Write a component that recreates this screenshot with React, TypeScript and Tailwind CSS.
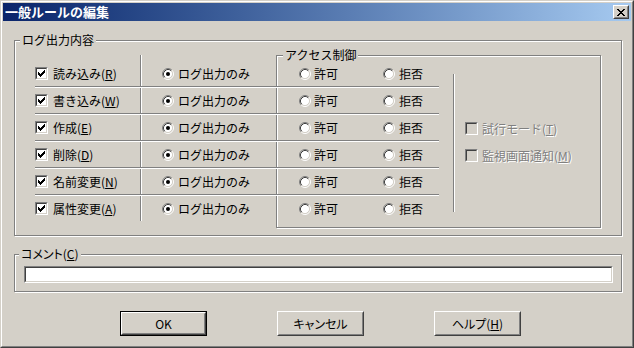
import React from 'react';

const rows = [
  { label: '読み込み', key: 'R' },
  { label: '書き込み', key: 'W' },
  { label: '作成', key: 'E' },
  { label: '削除', key: 'D' },
  { label: '名前変更', key: 'N' },
  { label: '属性変更', key: 'A' },
];

function Mnemonic({ k }: { k: string }) {
  return (
    <>
      (<span className="underline underline-offset-1">{k}</span>)
    </>
  );
}

function Checkbox({ checked, disabled }: { checked?: boolean; disabled?: boolean }) {
  const tops = [2, 3, 4, 3, 2, 1, 0];
  return (
    <div className="flex h-[13px] w-[13px] shrink-0 border border-t-[#808080] border-l-[#808080] border-b-white border-r-white">
      <div
        className={`flex flex-1 items-center justify-center border border-t-[#404040] border-l-[#404040] border-b-[#d4d0c8] border-r-[#d4d0c8] ${
          disabled ? 'bg-[#d4d0c8]' : 'bg-white'
        }`}
      >
        {checked && (
          <svg width="7" height="7" shapeRendering="crispEdges">
            {tops.map((y, x) => (
              <rect key={x} x={x} y={y} width="1" height="3" fill="#000" />
            ))}
          </svg>
        )}
      </div>
    </div>
  );
}

function Radio({ checked }: { checked?: boolean }) {
  return (
    <svg width="12" height="12" className="shrink-0">
      <circle cx="6" cy="6" r="4.5" fill="#fff" />
      <path d="M9.89 2.11 A5.5 5.5 0 0 0 2.11 9.89" stroke="#808080" fill="none" />
      <path d="M2.11 9.89 A5.5 5.5 0 0 0 9.89 2.11" stroke="#fff" fill="none" />
      <path d="M9.18 2.82 A4.5 4.5 0 0 0 2.82 9.18" stroke="#404040" fill="none" />
      <path d="M2.82 9.18 A4.5 4.5 0 0 0 9.18 2.82" stroke="#d4d0c8" fill="none" />
      {checked && <circle cx="6" cy="6" r="2" fill="#000" />}
    </svg>
  );
}

function Button({ children, isDefault }: { children: React.ReactNode; isDefault?: boolean }) {
  const inner = (
    <div className="flex h-full flex-1 border border-t-white border-l-white border-b-[#404040] border-r-[#404040]">
      <div className="flex flex-1 items-center justify-center border border-t-[#d4d0c8] border-l-[#d4d0c8] border-b-[#808080] border-r-[#808080] [font-feature-settings:'palt']">
        {children}
      </div>
    </div>
  );
  return (
    <div className={`flex h-[25px] w-[87px] ${isDefault ? 'border border-black' : ''}`}>{inner}</div>
  );
}

export default function App() {
  return (
    <div className="h-[348px] w-[634px] border border-t-[#d4d0c8] border-l-[#d4d0c8] border-b-[#404040] border-r-[#404040] bg-[#d4d0c8] font-['Noto_Sans_CJK_JP','Noto_Sans',sans-serif] text-[12px] leading-[14px] text-black">
      <div className="h-full border border-t-white border-l-white border-b-[#808080] border-r-[#808080] p-[1px]">
        {/* title bar */}
        <div className="flex h-[18px] items-center justify-between bg-linear-to-r from-[#0a246a] to-[#a6caf0] pl-[2px] pr-[2px]">
          <span className="text-[13px] font-bold text-white">一般ルールの編集</span>
          <div className="flex h-[14px] w-[16px] border border-t-white border-l-white border-b-[#404040] border-r-[#404040]">
            <div className="flex flex-1 items-center justify-center border border-t-[#d4d0c8] border-l-[#d4d0c8] border-b-[#808080] border-r-[#808080] bg-[#d4d0c8]">
              <svg width="8" height="7" shapeRendering="crispEdges">
                <path d="M0 0h2v1h-2zM6 0h2v1h-2zM1 1h2v1h-2zM5 1h2v1h-2zM2 2h4v1h-4zM3 3h2v1h-2zM2 4h4v1h-4zM1 5h2v1h-2zM5 5h2v1h-2zM0 6h2v1h-2zM6 6h2v1h-2z" fill="#000" />
              </svg>
            </div>
          </div>
        </div>

        {/* log output group */}
        <fieldset className="ml-[11px] mt-[12px] h-[203px] w-[608px] border border-[#808080] shadow-[inset_1px_1px_0_#fff,1px_1px_0_#fff]">
          <legend className="ml-[5px] bg-[#d4d0c8] px-[2px] leading-[14px]">ログ出力内容</legend>
          <div className="grid items-start justify-items-start pl-[20px]">
            {/* access control box (behind rows) */}
            <fieldset className="col-start-1 row-start-1 ml-[241px] mt-[1px] h-[180px] w-[325px] border border-[#808080] shadow-[inset_1px_1px_0_#fff,1px_1px_0_#fff]">
              <legend className="ml-[6px] bg-[#d4d0c8] px-[2px] leading-[14px]">アクセス制御</legend>
              <div className="flex">
                <div className="w-[176px] shrink-0" />
                <div className="mt-[12px] h-[138px] w-[2px] border-l border-l-[#808080] border-r border-r-white" />
                <div className="ml-[10px] mt-[60px] flex flex-col gap-[14px] text-[#808080] [text-shadow:1px_1px_0_#fff]">
                  <div className="flex h-[13px] items-center">
                    <Checkbox disabled />
                    <span className="ml-[4px] whitespace-nowrap">
                      試行モード<Mnemonic k="T" />
                    </span>
                  </div>
                  <div className="flex h-[13px] items-center">
                    <Checkbox disabled />
                    <span className="ml-[4px] whitespace-nowrap">
                      監視画面通知<Mnemonic k="M" />
                    </span>
                  </div>
                </div>
              </div>
            </fieldset>

            {/* rows */}
            <div className="col-start-1 row-start-1 mt-[8px] w-[404px]">
              {rows.map((row, i) => (
                <div key={row.key}>
                  <div className={`flex ${i === 0 ? 'h-[31px]' : 'h-[25px]'}`}>
                    <div className="flex h-[25px] w-[105px] items-center self-end">
                      <Checkbox checked />
                      <span className="ml-[5px] whitespace-nowrap">
                        {row.label}
                        <Mnemonic k={row.key} />
                      </span>
                    </div>
                    <div className="w-[2px] border-l border-l-[#808080] border-r border-r-white" />
                    <div className="flex h-[25px] w-[134px] items-center self-end pl-[20px]">
                      <Radio checked />
                      <span className="ml-[4px] whitespace-nowrap">ログ出力のみ</span>
                    </div>
                    <div className="flex h-[25px] flex-1 items-center self-end pl-[23px]">
                      <div className="flex w-[84px] items-center">
                        <Radio />
                        <span className="ml-[3px]">許可</span>
                      </div>
                      <div className="flex items-center">
                        <Radio />
                        <span className="ml-[4px]">拒否</span>
                      </div>
                    </div>
                  </div>
                  {i < rows.length - 1 && (
                    <div className="h-[2px] border-t border-t-[#808080] border-b border-b-white" />
                  )}
                </div>
              ))}
            </div>
          </div>
        </fieldset>

        {/* comment group */}
        <fieldset className="ml-[11px] mt-[11px] h-[45px] w-[608px] border border-[#808080] shadow-[inset_1px_1px_0_#fff,1px_1px_0_#fff]">
          <legend className="ml-[4px] bg-[#d4d0c8] px-[2px] leading-[14px] [font-feature-settings:'palt']">
            コメント<Mnemonic k="C" />
          </legend>
          <div className="ml-[9px] mt-[5px] flex h-[17px] w-[589px] border border-t-[#808080] border-l-[#808080] border-b-white border-r-white">
            <div className="flex-1 border border-t-[#404040] border-l-[#404040] border-b-[#d4d0c8] border-r-[#d4d0c8] bg-white" />
          </div>
        </fieldset>

        {/* buttons */}
        <div className="ml-[117px] mt-[19px] flex gap-[70px]">
          <Button isDefault>OK</Button>
          <Button>キャンセル</Button>
          <Button>
            ヘルプ<Mnemonic k="H" />
          </Button>
        </div>
      </div>
    </div>
  );
}
